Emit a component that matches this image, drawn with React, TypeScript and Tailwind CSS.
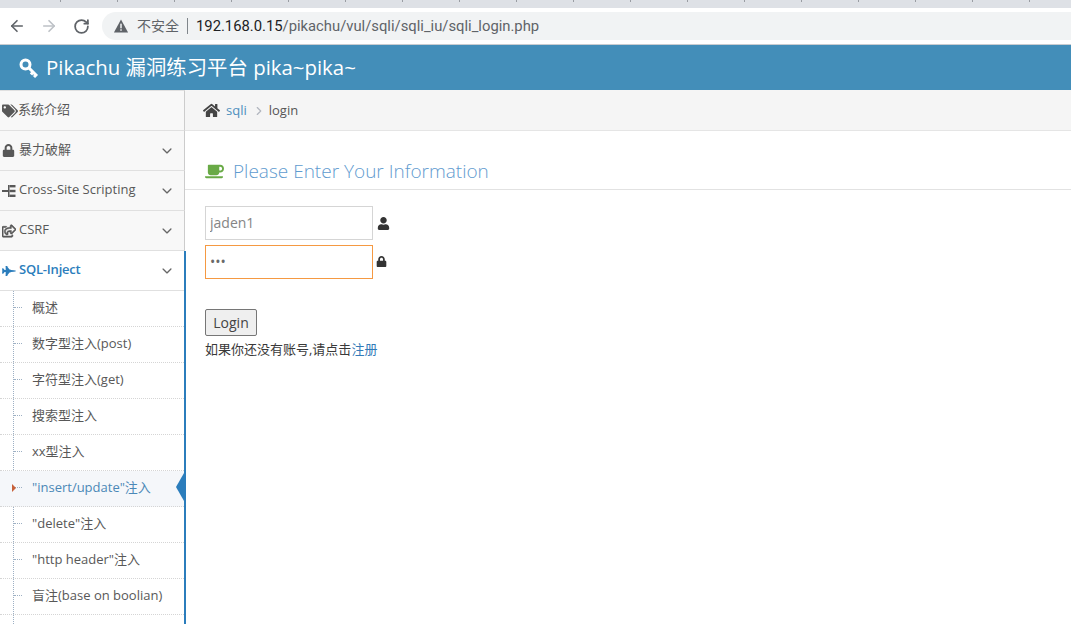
import { FaCoffee, FaFighterJet, FaHome, FaLock, FaRegShareSquare, FaTags, FaUser } from 'react-icons/fa';
import { IoIosArrowDown } from 'react-icons/io';
import { LuArrowLeft, LuArrowRight, LuChevronRight, LuRotateCw } from 'react-icons/lu';

const ticks = [61, ...Array(18).fill(57)];

const TreeIcon = () => (
  <svg viewBox="0 0 14 12" className="h-[12px] w-[14px]" fill="currentColor">
    <rect x="0" y="5" width="4" height="2" />
    <rect x="6" y="0" width="1.5" height="12" />
    <rect x="4" y="5" width="2" height="2" />
    <rect x="7.5" y="0" width="6" height="2.4" />
    <rect x="7.5" y="4.8" width="6" height="2.4" />
    <rect x="7.5" y="9.6" width="6" height="2.4" />
  </svg>
);

const menus = [
  { label: '系统介绍', icon: <FaTags className="text-[16px]" />, arrow: false, gap: 'gap-0', top: true, cjk: true },
  { label: '暴力破解', icon: <FaLock className="text-[13px]" />, arrow: true, gap: 'gap-[4px]', top: false, cjk: true },
  { label: 'Cross-Site Scripting', icon: <TreeIcon />, arrow: true, gap: 'gap-[3px]', top: false, cjk: false },
  { label: 'CSRF', icon: <FaRegShareSquare className="text-[14px]" stroke="currentColor" strokeWidth={24} />, arrow: true, gap: 'gap-[3px]', top: false, cjk: false },
];

const subItems = [
  '概述',
  '数字型注入(post)',
  '字符型注入(get)',
  '搜索型注入',
  'xx型注入',
  '"insert/update"注入',
  '"delete"注入',
  '"http header"注入',
  '盲注(base on boolian)',
];

export default function App() {
  return (
    <div className="flex h-[624px] w-[1071px] flex-col overflow-hidden bg-white font-['Open_Sans','Noto_Sans_CJK_SC',sans-serif] text-[13px] text-[#585858]">
      {/* browser chrome */}
      <div className="flex h-2 shrink-0 bg-[#dee1e6]">
        {ticks.map((w, i) => (
          <div key={i} className="h-[2px] shrink-0 border-r border-[#9a9da3]" style={{ width: w }} />
        ))}
      </div>
      <div className="flex h-[36px] shrink-0 items-center bg-white pl-[8px]">
        <LuArrowLeft className="text-[18px] text-[#5f6368]" strokeWidth={2.2} />
        <LuArrowRight className="ml-[14px] text-[18px] text-[#bdc1c6]" strokeWidth={2.2} />
        <LuRotateCw className="ml-[15px] text-[17px] text-[#5f6368]" strokeWidth={2.5} />
        <div className="ml-[12px] flex h-7 flex-1 items-center rounded-l-full bg-[#f1f3f4] pl-[11px] font-['Roboto','Noto_Sans_CJK_SC',sans-serif] text-[14.8px]">
          <svg viewBox="0 0 16 15" className="h-[14px] w-[16px]">
            <path d="M8 0.5 15.6 14.5H0.4Z" fill="#5f6368" />
            <rect x="7.2" y="5" width="1.6" height="5" fill="#f1f3f4" />
            <rect x="7.2" y="11" width="1.6" height="1.6" fill="#f1f3f4" />
          </svg>
          <span className="ml-[8px] text-[14px] text-[#5f6368]">不安全</span>
          <span className="ml-[8px] h-[16px] w-px bg-[#80868b]" />
          <span className="ml-[8px] text-[#202124]">192.168.0.15</span>
          <span className="text-[#5f6368]">/pikachu/vul/sqli/sqli_iu/sqli_login.php</span>
        </div>
      </div>

      {/* header */}
      <div className="flex h-[46px] shrink-0 items-center border-t border-[#c9ccd0] bg-[#438eb9] pl-[19px] text-[20.4px] text-white">
        <svg viewBox="0 0 20 20" className="h-5 w-5" fill="none" stroke="white">
          <circle cx="6.5" cy="6.5" r="4.5" strokeWidth="3" />
          <path d="M9.5 9.5 18 18M14 14l-2 2.5M17 17l-2 2" strokeWidth="3" />
        </svg>
        <span className="ml-[7px]">Pikachu 漏洞练习平台 pika~pika~</span>
      </div>

      <div className="flex min-h-0 flex-1">
        {/* sidebar */}
        <div className="flex w-[185px] shrink-0 flex-col">
          {menus.map((m) => (
            <div key={m.label} className={`flex shrink-0 items-center border-b border-r border-b-[#e0e0e0] border-r-[#cccccc] bg-[#f8f8f8] pl-[2px] pr-[10px] ${m.top ? 'h-[41px] border-t border-t-[#e0e0e0]' : 'h-10'} ${m.gap}`}>
              {m.icon}
              <span className={m.cjk ? '-mt-[2px]' : '-mt-[1px]'}>{m.label}</span>
              {m.arrow && <IoIosArrowDown className="ml-auto text-[14px] text-[#666666]" />}
            </div>
          ))}
          <div className="relative z-10 -mr-px flex min-h-0 flex-1 flex-col border-r-2 border-[#2b7dbc] bg-white">
            <div className="flex h-10 shrink-0 items-center gap-[3px] border-b border-[#e0e0e0] pl-[2px] pr-[10px] font-semibold text-[#2b7dbc]">
              <FaFighterJet className="text-[14px]" />
              <span className="-mt-[1px] tracking-[-0.2px]">SQL-Inject</span>
              <IoIosArrowDown className="ml-auto text-[14px] text-[#666666]" />
            </div>
            <div className="relative flex-1">
              <div className="absolute bottom-0 left-[13px] top-0 border-l border-dotted border-[#9db0c4]" />
              {subItems.map((s, i) => {
                const active = i === 5;
                return (
                  <div key={s} className={`relative flex h-9 items-center border-b border-dotted border-[#d5d5d5] pb-[2px] pl-[32px] ${active ? 'bg-[#f5f7fa] text-[#4b88b7]' : ''}`}>
                    <span className="absolute left-[14px] top-[16px] w-[8px] border-t border-dotted border-[#9db0c4]" />
                    {active && (
                      <>
                        <span className="absolute left-[12px] top-[13px] border-y-[4px] border-l-[4px] border-y-transparent border-l-[#c86139]" />
                        <span className="absolute right-0 top-[2px] border-y-[14px] border-r-[8px] border-y-transparent border-r-[#2b7dbc]" />
                      </>
                    )}
                    {s}
                  </div>
                );
              })}
            </div>
          </div>
        </div>

        {/* main */}
        <div className="min-w-0 flex-1">
          <div className="flex h-[41px] items-center border-b border-[#e5e5e5] bg-[#f5f5f5] pl-[18px] pt-[1px] text-[#555555]">
            <FaHome className="text-[17px] text-[#444444]" />
            <span className="ml-[6px] text-[#4c8fbd]">sqli</span>
            <LuChevronRight className="ml-[5px] text-[14px] text-[#b2b6bf]" />
            <span className="ml-[3px]">login</span>
          </div>
          <div className="mt-[24px] flex h-[35px] items-center border-b border-[#e2e2e2] pb-[2px] pl-[20px] text-[19px] font-light text-[#5f9bcf]">
            <FaCoffee className="text-[19px] text-[#69aa46]" />
            <span className="ml-[9px]">Please Enter Your Information</span>
          </div>
          <div className="flex items-center pl-[20px] pt-[16px]">
            <input readOnly value="jaden1" className="h-[34px] w-[168px] border border-[#d5d5d5] px-[4px] pb-[2px] text-[14px] text-[#858585] outline-none" />
            <FaUser className="ml-[4px] text-[13px] text-[#333333]" />
          </div>
          <div className="flex items-center pl-[20px] pt-[5px]">
            <input readOnly type="password" value="123" className="h-[34px] w-[168px] border border-[#f59942] px-[4px] pb-[2px] text-[14px] text-[#696969] outline-none" />
            <FaLock className="-mt-[2px] ml-[3px] text-[11px] text-[#333333]" />
          </div>
          <div className="pl-[20px] pt-[30px]">
            <button className="h-[27px] w-[52px] rounded-[2px] border border-[#767676] bg-[#efefef] text-[14px] text-[#444444]">Login</button>
            <div className="mt-[4px] text-[#393939]">
              如果你还没有账号,请点击<span className="text-[#337ab7]">注册</span>
            </div>
          </div>
        </div>
      </div>
    </div>
  );
}
